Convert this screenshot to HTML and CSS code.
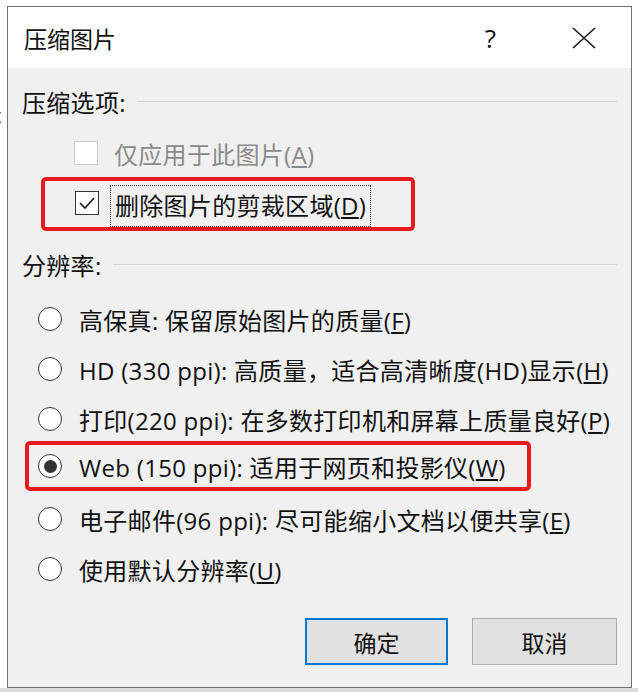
FILE: index.html
```html
<!DOCTYPE html>
<html lang="zh-CN">
<head>
    <meta charset="UTF-8">
    <title>压缩图片</title>
    <link rel="stylesheet" href="styles.css">
</head>
<body>
    <div class="screen">
        <div class="edge-left"><span>t</span></div>
        <div class="dialog">
            <div class="titlebar">
                <span class="title">压缩图片</span>
                <span class="help">?</span>
                <svg class="close" width="24" height="22" viewBox="0 0 24 22">
                    <path d="M1 1 L23 21 M23 1 L1 21" stroke="#1a1a1a" stroke-width="1.6" fill="none"/>
                </svg>
            </div>
            <div class="content">
                <div class="group-head first">
                    <span>压缩选项:</span>
                    <span class="rule"></span>
                </div>

                <label class="check-row disabled">
                    <span class="box"></span>
                    <span class="label">仅应用于此图片(<u>A</u>)</span>
                </label>

                <div class="mark mark-check">
                    <label class="check-row">
                        <span class="box">
                            <svg width="22" height="22" viewBox="0 0 22 22">
                                <polyline points="4,11 9,16 18,6" stroke="#1a1a1a" stroke-width="1.6" fill="none"/>
                            </svg>
                        </span>
                        <span class="label focus">删除图片的剪裁区域(<u>D</u>)</span>
                    </label>
                </div>

                <div class="group-head second">
                    <span>分辨率:</span>
                    <span class="rule"></span>
                </div>

                <div class="radios">
                    <label class="radio-row"><span class="dot"></span><span>高保真: 保留原始图片的质量(<u>F</u>)</span></label>
                    <label class="radio-row"><span class="dot"></span><span>HD (330 ppi): 高质量，适合高清晰度(HD)显示(<u>H</u>)</span></label>
                    <label class="radio-row"><span class="dot"></span><span>打印(220 ppi): 在多数打印机和屏幕上质量良好(<u>P</u>)</span></label>
                    <div class="mark mark-radio">
                        <label class="radio-row"><span class="dot on"></span><span>Web (150 ppi): 适用于网页和投影仪(<u>W</u>)</span></label>
                    </div>
                    <label class="radio-row"><span class="dot"></span><span>电子邮件(96 ppi): 尽可能缩小文档以便共享(<u>E</u>)</span></label>
                    <label class="radio-row"><span class="dot"></span><span>使用默认分辨率(<u>U</u>)</span></label>
                </div>

                <div class="buttons">
                    <button class="btn primary">确定</button>
                    <button class="btn">取消</button>
                </div>
            </div>
        </div>
        <div class="edge-right"></div>
    </div>
    <div class="floor"></div>
</body>
</html>
```

FILE: styles.css
```css
body {
    margin: 0;
    background-color: #ffffff;
    font-family: "Open Sans", "Noto Sans CJK SC", sans-serif;
    color: #111111;
}
.screen {
    display: flex;
    padding-top: 6px;
    height: 682px;
}
.edge-left {
    width: 7px;
    overflow: hidden;
    font-size: 20px;
    padding-top: 96px;
    box-sizing: border-box;
}
.edge-left span {
    display: block;
    margin-left: -6px;
}
.edge-right {
    flex: 1;
}
.floor {
    height: 4px;
    background-color: #dcdcdc;
}
.dialog {
    width: 625px;
    height: 682px;
    box-sizing: border-box;
    border: 1px solid #707070;
    background-color: #f0f0f0;
    display: flex;
    flex-direction: column;
}
.titlebar {
    height: 61px;
    background-color: #ffffff;
    display: flex;
    align-items: center;
    padding-left: 16px;
    flex-shrink: 0;
}
.title {
    font-family: "Noto Sans CJK SC", sans-serif;
    font-size: 23px;
    flex: 1;
}
.help {
    font-size: 26px;
    margin-right: 76px;
}
.close {
    margin-right: 35px;
}
.content {
    flex: 1;
    display: flex;
    flex-direction: column;
    padding: 0 14px 22px 14px;
    font-size: 24px;
    letter-spacing: 0.3px;
}
.group-head {
    display: flex;
    align-items: center;
    height: 28px;
}
.group-head.first {
    margin-top: 19px;
}
.group-head.second {
    margin-top: 19px;
}
.rule {
    flex: 1;
    height: 1px;
    background-color: #d4d4d4;
    margin-left: 11px;
}
.check-row {
    display: flex;
    align-items: center;
    height: 28px;
    padding-left: 52px;
    white-space: nowrap;
}
.group-head.first + .check-row {
    margin-top: 24px;
}
.check-row .box {
    width: 22px;
    height: 22px;
    border: 1px solid #333333;
    background-color: #ffffff;
    display: flex;
    margin-right: 16px;
    flex-shrink: 0;
}
.check-row.disabled {
    color: #8a8a8a;
}
.check-row.disabled .box {
    border-color: #cccccc;
}
.mark {
    border: 4px solid #e8191c;
    border-radius: 5px;
}
.mark-check {
    width: 374px;
    height: 54px;
    box-sizing: border-box;
    margin-left: 19px;
    margin-top: 10px;
    display: flex;
    align-items: flex-start;
}
.mark-check .check-row {
    padding-left: 30px;
    height: 42px;
    margin-top: 4px;
}
.mark-check .box {
    margin-right: 11px;
    margin-top: -6px;
}
.label.focus {
    border: 1px dotted #333333;
    padding: 0 4px;
    height: 42px;
    line-height: 40px;
    box-sizing: border-box;
}
.radios {
    margin-top: 16px;
    display: flex;
    flex-direction: column;
}
.radio-row {
    display: flex;
    align-items: center;
    height: 50px;
    padding-left: 16px;
    white-space: nowrap;
}
.dot {
    width: 22px;
    height: 22px;
    border: 1.5px solid #333333;
    border-radius: 50%;
    background-color: #ffffff;
    margin-right: 17px;
    display: flex;
    align-items: center;
    justify-content: center;
    flex-shrink: 0;
}
.dot.on::after {
    content: "";
    width: 13px;
    height: 13px;
    border-radius: 50%;
    background-color: #333333;
}
.mark-radio {
    width: 506px;
    height: 50px;
    box-sizing: border-box;
    margin: -3px 0 3px 3px;
}
.mark-radio .radio-row {
    height: 42px;
    padding-left: 9px;
}
.buttons {
    margin-top: auto;
    display: flex;
    justify-content: flex-end;
    gap: 24px;
}
.btn {
    font-family: "Noto Sans CJK SC", sans-serif;
    font-size: 23px;
    height: 47px;
    width: 145px;
    background-color: #e1e1e1;
    border: 1px solid #adadad;
    color: #111111;
}
.btn.primary {
    width: 143px;
    border: 2px solid #0078d7;
}
```
